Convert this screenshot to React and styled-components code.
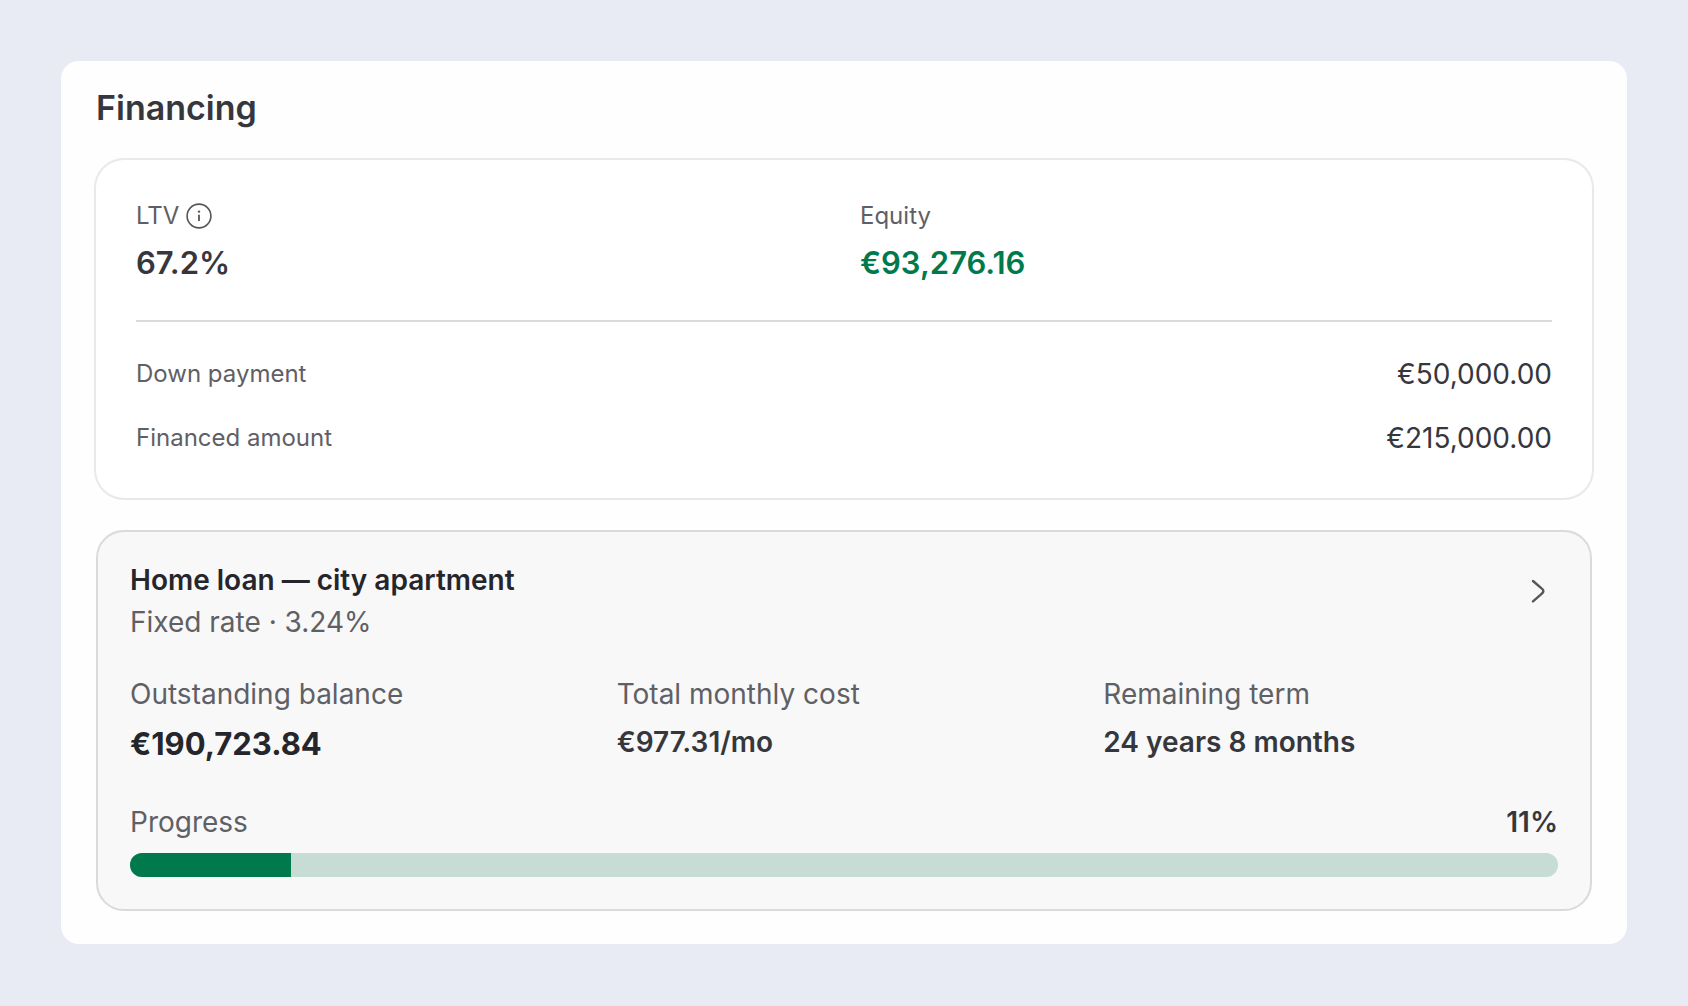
import React from "react";
import styled, { createGlobalStyle } from "styled-components";

const loan = {
  name: "Home loan — city apartment",
  rate: "Fixed rate · 3.24%",
  financed: 215000,
  outstanding: 190723.84,
  monthly: 977.31,
  term: "24 years 8 months",
};

const formatEuro = (amount) =>
  `€${amount.toLocaleString("en-US", {
    minimumFractionDigits: 2,
    maximumFractionDigits: 2,
  })}`;

const InfoIcon = () => (
  <svg width="26" height="26" viewBox="0 0 26 26" fill="none" aria-hidden="true">
    <circle cx="13" cy="13" r="11.9" stroke="#55565b" strokeWidth="1.6" />
    <path d="M13 11.8V18" stroke="#55565b" strokeWidth="1.8" />
    <circle cx="13" cy="8.6" r="1.2" fill="#55565b" />
  </svg>
);

const ChevronIcon = () => (
  <svg width="40" height="40" viewBox="0 0 40 40" fill="none" aria-hidden="true">
    <path
      d="M15 10L23.6 17.4Q27.2 20 23.6 22.9L15 30.4"
      stroke="#55565b"
      strokeWidth="2.4"
      strokeLinecap="round"
      strokeLinejoin="round"
    />
  </svg>
);

const App = () => {
  const progress = (1 - loan.outstanding / loan.financed) * 100;

  return (
    <Page>
      <GlobalStyle />
      <Panel>
        <PanelTitle>Financing</PanelTitle>

        <SummaryCard>
          <SummaryGrid>
            <div>
              <SmallLabel>
                LTV
                <IconButton type="button" aria-label="About LTV">
                  <InfoIcon />
                </IconButton>
              </SmallLabel>
              <SummaryValue>67.2%</SummaryValue>
            </div>
            <div>
              <SmallLabel>Equity</SmallLabel>
              <SummaryValue $positive>{formatEuro(93276.16)}</SummaryValue>
            </div>
          </SummaryGrid>
          <Rows>
            <Row>
              <SmallLabel>Down payment</SmallLabel>
              <Amount>{formatEuro(50000)}</Amount>
            </Row>
            <Row>
              <SmallLabel>Financed amount</SmallLabel>
              <Amount>{formatEuro(loan.financed)}</Amount>
            </Row>
          </Rows>
        </SummaryCard>

        <LoanCard>
          <LoanHeader>
            <div>
              <LoanName>{loan.name}</LoanName>
              <Label>{loan.rate}</Label>
            </div>
            <OpenButton type="button" aria-label="Open loan">
              <ChevronIcon />
            </OpenButton>
          </LoanHeader>

          <LoanStats>
            <Stat>
              <Label>Outstanding balance</Label>
              <StatValue $large>{formatEuro(loan.outstanding)}</StatValue>
            </Stat>
            <Stat>
              <Label>Total monthly cost</Label>
              <StatValue>{formatEuro(loan.monthly)}/mo</StatValue>
            </Stat>
            <Stat>
              <Label>Remaining term</Label>
              <StatValue>{loan.term}</StatValue>
            </Stat>
          </LoanStats>

          <ProgressHeader>
            <Label id="progress-label">Progress</Label>
            <StatValue>{Math.round(progress)}%</StatValue>
          </ProgressHeader>
          <Track
            role="progressbar"
            aria-labelledby="progress-label"
            aria-valuenow={Math.round(progress)}
            aria-valuemin={0}
            aria-valuemax={100}
          >
            <Fill style={{ width: `${progress}%` }} />
          </Track>
        </LoanCard>
      </Panel>
    </Page>
  );
};

const GlobalStyle = createGlobalStyle`
  * {
    box-sizing: border-box;
  }
  body {
    margin: 0;
    background: #e8eaf4;
    font-family: Inter, "Liberation Sans", sans-serif;
  }
  h2, h3, p {
    margin: 0;
  }
`;

const Page = styled.main`
  min-height: 100vh;
  padding: 61px;
`;
const Panel = styled.section`
  padding: 22px 35px 33px;
  border-radius: 18px;
  background: #fefefe;
`;
const PanelTitle = styled.h2`
  margin-bottom: 27px;
  font-size: 34px;
  line-height: 50px;
  font-weight: 600;
  color: #36373d;
`;

const SummaryCard = styled.div`
  padding: 40px;
  border-radius: 28px;
  background: #fff;
  box-shadow: 0 0 0 2px #e9e9ea;
`;
const SummaryGrid = styled.div`
  display: grid;
  grid-template-columns: 1fr 1fr;
  gap: 32px;
  padding-bottom: 34px;
  border-bottom: 2px solid #d9dadb;
`;
const SmallLabel = styled.p`
  display: flex;
  align-items: center;
  gap: 7px;
  font-size: 24px;
  line-height: 32px;
  color: #5f6065;
`;
const IconButton = styled.button`
  display: flex;
  padding: 0;
  border: none;
  background: none;
  cursor: pointer;
`;
const SummaryValue = styled.p`
  margin-top: 8px;
  font-size: 31px;
  line-height: 46px;
  font-weight: 600;
  color: ${({ $positive }) => ($positive ? "#007a4d" : "#36373d")};
`;
const Rows = styled.div`
  display: flex;
  flex-direction: column;
  gap: 24px;
  padding-top: 32px;
`;
const Row = styled.div`
  display: flex;
  justify-content: space-between;
  align-items: center;
`;
const Amount = styled.p`
  font-size: 28px;
  line-height: 40px;
  color: #36373d;
`;

const LoanCard = styled.div`
  margin-top: 32px;
  padding: 32px;
  border: 2px solid #d9dadb;
  border-radius: 28px;
  background: #f8f8f8;
`;
const LoanHeader = styled.div`
  display: flex;
  justify-content: space-between;
  align-items: flex-start;
`;
const LoanName = styled.h3`
  margin-bottom: 10px;
  font-size: 28px;
  line-height: 32px;
  font-weight: 600;
  color: #25262b;
`;
const Label = styled.p`
  font-size: 28px;
  line-height: 32px;
  color: #5f6065;
`;
const OpenButton = styled(IconButton)`
  padding-top: 7px;
`;
const LoanStats = styled.div`
  display: grid;
  grid-template-columns: repeat(3, 1fr);
  gap: 32px;
  margin: 40px 0 44px;
`;
const Stat = styled.div`
  display: flex;
  flex-direction: column;
  gap: 16px;
`;
const StatValue = styled.p`
  font-size: ${({ $large }) => ($large ? "31px" : "28px")};
  line-height: ${({ $large }) => ($large ? "36px" : "32px")};
  font-weight: ${({ $large }) => ($large ? 700 : 600)};
  color: ${({ $large }) => ($large ? "#25262b" : "#36373d")};
`;
const ProgressHeader = styled.div`
  display: flex;
  justify-content: space-between;
  margin-bottom: 15px;
`;
const Track = styled.div`
  height: 24px;
  border-radius: 12px;
  background: #c6dcd4;
  overflow: hidden;
`;
const Fill = styled.div`
  height: 100%;
  background: #007a4d;
`;

export default App;
